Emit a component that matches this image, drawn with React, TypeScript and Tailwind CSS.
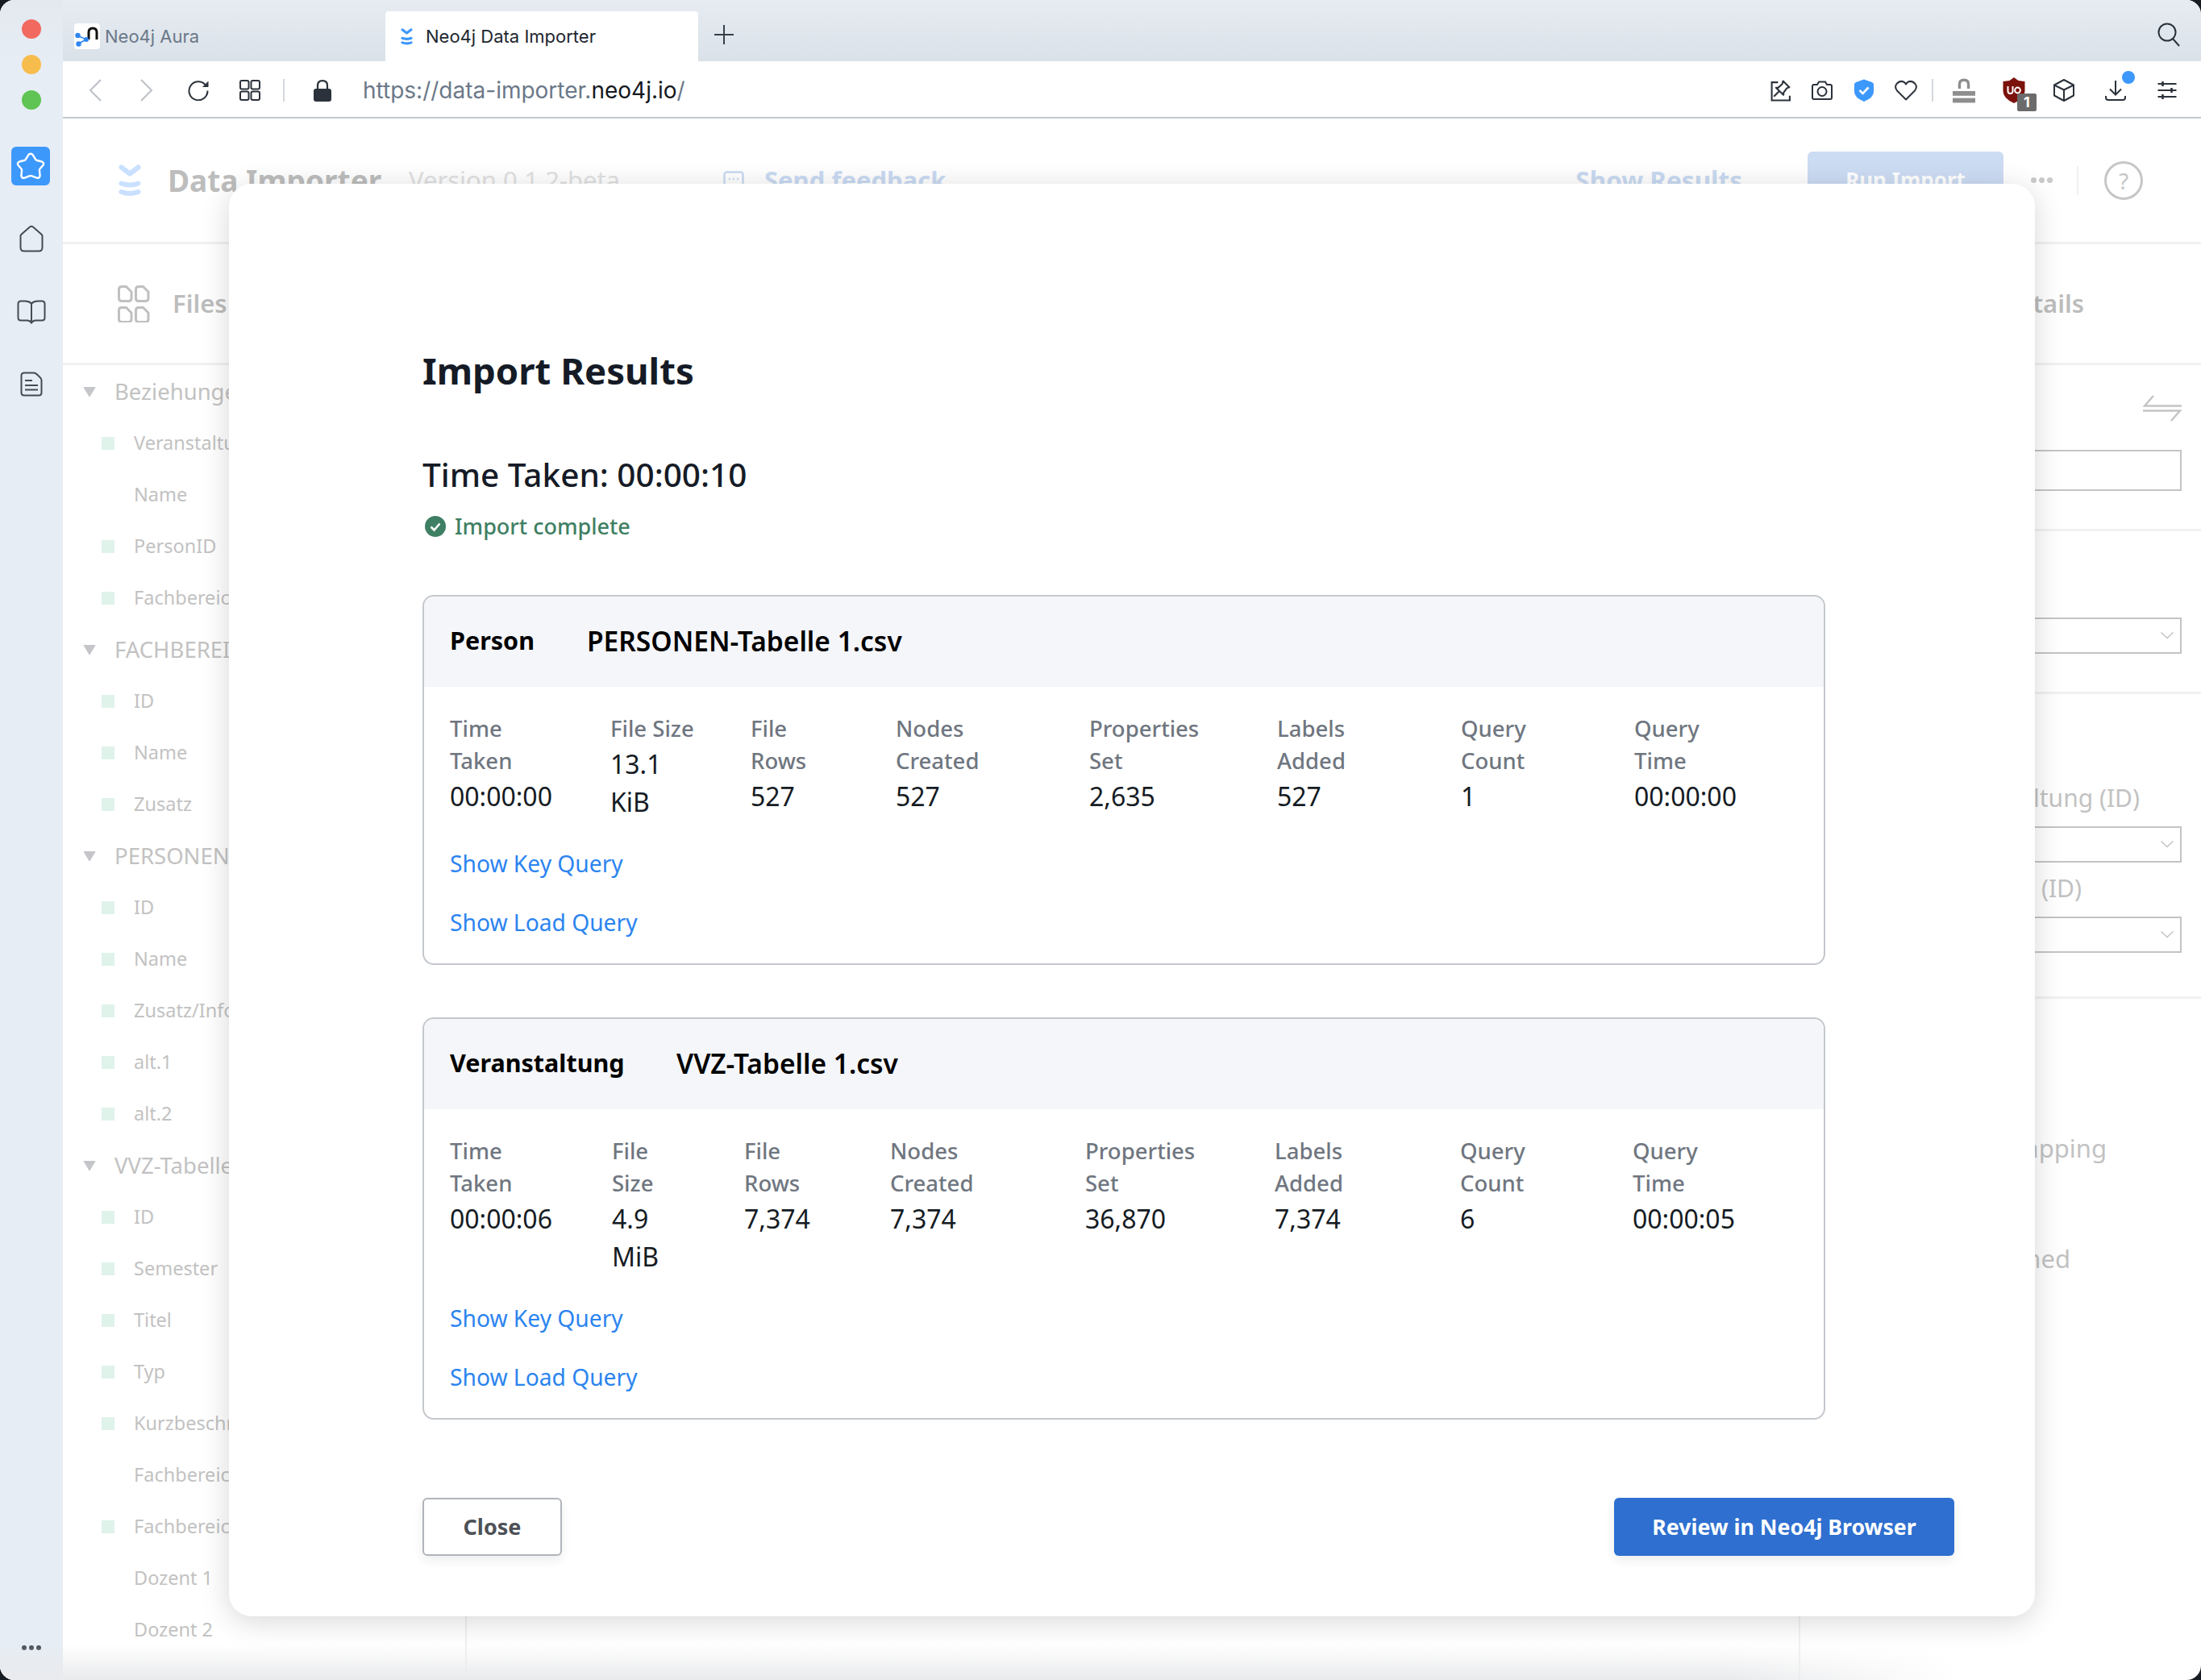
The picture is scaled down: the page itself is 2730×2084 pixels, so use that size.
import { Fragment } from 'react'

interface Stat {
  label: string
  value: string
}

interface ResultCard {
  node: string
  file: string
  gap: string
  cols: string
  stats: Stat[]
}

const cards: ResultCard[] = [
  {
    node: 'Person',
    file: 'PERSONEN-Tabelle 1.csv',
    gap: 'w-[170px]',
    cols: 'grid-cols-[199px_174px_180px_240px_233px_228px_215px_auto]',
    stats: [
      { label: 'Time\nTaken', value: '00:00:00' },
      { label: 'File Size', value: '13.1\nKiB' },
      { label: 'File\nRows', value: '527' },
      { label: 'Nodes\nCreated', value: '527' },
      { label: 'Properties\nSet', value: '2,635' },
      { label: 'Labels\nAdded', value: '527' },
      { label: 'Query\nCount', value: '1' },
      { label: 'Query\nTime', value: '00:00:00' },
    ],
  },
  {
    node: 'Veranstaltung',
    file: 'VVZ-Tabelle 1.csv',
    gap: 'w-[281px]',
    cols: 'grid-cols-[201px_164px_181px_242px_235px_230px_214px_auto]',
    stats: [
      { label: 'Time\nTaken', value: '00:00:06' },
      { label: 'File\nSize', value: '4.9\nMiB' },
      { label: 'File\nRows', value: '7,374' },
      { label: 'Nodes\nCreated', value: '7,374' },
      { label: 'Properties\nSet', value: '36,870' },
      { label: 'Labels\nAdded', value: '7,374' },
      { label: 'Query\nCount', value: '6' },
      { label: 'Query\nTime', value: '00:00:05' },
    ],
  },
]

const tree = [
  { name: 'Beziehungen-Tabelle 1.csv', kind: 'head' },
  { name: 'VeranstaltungID', kind: 'key' },
  { name: 'Name', kind: 'plain' },
  { name: 'PersonID', kind: 'key' },
  { name: 'Fachbereich', kind: 'key' },
  { name: 'FACHBEREICH-Tabelle 1.csv', kind: 'head' },
  { name: 'ID', kind: 'key' },
  { name: 'Name', kind: 'key' },
  { name: 'Zusatz', kind: 'key' },
  { name: 'PERSONEN-Tabelle 1.csv', kind: 'head' },
  { name: 'ID', kind: 'key' },
  { name: 'Name', kind: 'key' },
  { name: 'Zusatz/Info', kind: 'key' },
  { name: 'alt.1', kind: 'key' },
  { name: 'alt.2', kind: 'key' },
  { name: 'VVZ-Tabelle 1.csv', kind: 'head' },
  { name: 'ID', kind: 'key' },
  { name: 'Semester', kind: 'key' },
  { name: 'Titel', kind: 'key' },
  { name: 'Typ', kind: 'key' },
  { name: 'Kurzbeschreibung', kind: 'key' },
  { name: 'Fachbereich 1', kind: 'plain' },
  { name: 'Fachbereich 2', kind: 'key' },
  { name: 'Dozent 1', kind: 'plain' },
  { name: 'Dozent 2', kind: 'plain' },
]

function ImporterLogo({ className, color }: { className: string; color: string }) {
  return (
    <svg viewBox="0 0 28 40" className={className} fill="none" stroke={color} strokeWidth="6" strokeLinecap="round" strokeLinejoin="round">
      <path d="M3.5 3.5 L14 11.5 L24.5 3.5" />
      <path d="M3.5 23.5 Q14 27.5 24.5 23.5" />
      <path d="M3.5 34 Q14 38 24.5 34" />
    </svg>
  )
}

function AuraLogo() {
  return (
    <svg viewBox="0 0 32 32" className="w-[32px] h-[32px] bg-white rounded-[4px] shrink-0" fill="none">
      <path d="M18 20 V11 Q18 6 23 6 Q28 6 28 11 V20" stroke="#111" strokeWidth="3" />
      <path d="M4 15 L15 20 L5.5 25" stroke="#2f86f2" strokeWidth="1.6" />
      <circle cx="4.5" cy="15" r="3.2" fill="#2f86f2" />
      <circle cx="15" cy="20" r="3" fill="#2f86f2" />
      <circle cx="5.5" cy="25.5" r="3.2" fill="#2f86f2" />
    </svg>
  )
}

function FileCell({ x, y }: { x: number; y: number }) {
  return (
    <path
      transform={`translate(${x} ${y})`}
      d="M5 1.5 H10.5 L17 8 V16 Q17 19.5 13.5 19.5 H5 Q1.5 19.5 1.5 16 V5 Q1.5 1.5 5 1.5Z"
    />
  )
}

function SelectBox({ className }: { className: string }) {
  return (
    <div className={`flex items-center justify-end border-2 border-[#c4c4c4] pr-[8px] ${className}`}>
      <svg viewBox="0 0 16 9" className="w-[16px] h-[9px]" fill="none" stroke="#c4c4c4" strokeWidth="1.5">
        <path d="M0.5 0.5 L8 7.5 L15.5 0.5" />
      </svg>
    </div>
  )
}

function Rail() {
  return (
    <aside className="w-[78px] shrink-0 flex flex-col items-center pt-[24px] pb-[37px] bg-gradient-to-b from-[#e4e9f0] to-[#e7edf4] to-[80px] bg-[#e7edf4]">
      <div className="flex flex-col gap-[20px]">
        <div className="w-[24px] h-[24px] rounded-full bg-[#f1695f]" />
        <div className="w-[24px] h-[24px] rounded-full bg-[#f7bd4c]" />
        <div className="w-[24px] h-[24px] rounded-full bg-[#5fc453]" />
      </div>
      <div className="mt-[46px] mr-[2px] w-[48px] h-[48px] rounded-[6px] bg-[#3d98fb] flex items-center justify-center">
        <svg viewBox="0 0 36 34" className="w-[36px] h-[34px]" fill="none" stroke="#fff" strokeWidth="2.4" strokeLinejoin="round">
          <path d="M15.5 2.8 Q18 0.8 20.5 2.8 L24 8.5 Q24.6 9.8 26 10 L32 11.5 Q35 12.8 33.6 15.8 L29.5 20.5 Q28.8 21.4 29 22.8 L29.6 29 Q29 32.6 25.6 31.6 L19.6 29.3 Q18 28.8 16.4 29.3 L10.4 31.6 Q7 32.6 6.4 29 L7 22.8 Q7.2 21.4 6.5 20.5 L2.4 15.8 Q1 12.8 4 11.5 L10 10 Q11.4 9.8 12 8.5 Z" />
        </svg>
      </div>
      <svg viewBox="0 0 30 34" className="mt-[49px] w-[30px] h-[34px]" fill="none" stroke="#454b55" strokeWidth="2">
        <path d="M1.5 14 Q1.5 12.8 2.5 11.8 L13 2.5 Q15 1 17 2.5 L27.5 11.8 Q28.5 12.8 28.5 14 V28 Q28.5 32.5 24 32.5 H6 Q1.5 32.5 1.5 28 Z" />
      </svg>
      <svg viewBox="0 0 36 30" className="mt-[59px] w-[36px] h-[30px]" fill="none" stroke="#454b55" strokeWidth="2">
        <path d="M18 4.5 Q15 1.5 10 1.5 H5 Q1.5 1.5 1.5 5 V22 Q1.5 25.5 5 25.5 H13 Q16 25.5 18 28.5 Q20 25.5 23 25.5 H31 Q34.5 25.5 34.5 22 V5 Q34.5 1.5 31 1.5 H26 Q21 1.5 18 4.5 V28" />
      </svg>
      <svg viewBox="0 0 28 31" className="mt-[59px] w-[28px] h-[31px]" fill="none" stroke="#454b55" strokeWidth="2">
        <path d="M5 1.5 H17 Q19 1.5 21 3.5 L25 7.5 Q26.5 9 26.5 11 V26 Q26.5 29.5 23 29.5 H5 Q1.5 29.5 1.5 26 V5 Q1.5 1.5 5 1.5Z" />
        <path d="M6 11 H15 M6 17 H22 M6 22.5 H22" />
      </svg>
      <div className="mt-auto flex gap-[3px]">
        <div className="w-[6px] h-[6px] rounded-full bg-[#454b55]" />
        <div className="w-[6px] h-[6px] rounded-full bg-[#454b55]" />
        <div className="w-[6px] h-[6px] rounded-full bg-[#454b55]" />
      </div>
    </aside>
  )
}

function TabStrip() {
  return (
    <div className="h-[76px] shrink-0 flex items-end bg-gradient-to-b from-[#e7ecf2] to-[#dae1e8] font-['Inter',sans-serif]">
      <div className="w-[400px] h-[62px] pl-[14px] flex items-center gap-[6px]">
        <AuraLogo />
        <span className="text-[22px] text-[#6b7889]">Neo4j Aura</span>
      </div>
      <div className="w-[388px] h-[62px] bg-white rounded-t-[4px] pl-[19px] flex items-center gap-[16px]">
        <ImporterLogo className="w-[15px] h-[21px]" color="#3d98fb" />
        <span className="text-[22px] text-[#20262e]">Neo4j Data Importer</span>
      </div>
      <svg viewBox="0 0 26 26" className="ml-[19px] mb-[20px] w-[26px] h-[26px]" fill="none" stroke="#3a4048" strokeWidth="2">
        <path d="M13 1 V25 M1 13 H25" />
      </svg>
      <svg viewBox="0 0 28 30" className="ml-auto mr-[26px] mb-[18px] w-[28px] h-[30px]" fill="none" stroke="#2b323b" strokeWidth="2">
        <circle cx="12" cy="12" r="10.5" />
        <path d="M19 20 L27 29" />
      </svg>
    </div>
  )
}

function Toolbar() {
  return (
    <div className="h-[71px] shrink-0 flex items-center bg-white border-b-2 border-[#c3c9d0] pt-[3px] pl-[32px] pr-[30px] font-['Inter',sans-serif]">
      <svg viewBox="0 0 16 28" className="w-[16px] h-[28px]" fill="none" stroke="#bcc1c7" strokeWidth="2">
        <path d="M15 1 L2 14 L15 27" />
      </svg>
      <svg viewBox="0 0 16 28" className="ml-[48px] w-[16px] h-[28px]" fill="none" stroke="#bcc1c7" strokeWidth="2">
        <path d="M1 1 L14 14 L1 27" />
      </svg>
      <svg viewBox="0 0 26 26" className="ml-[43px] w-[26px] h-[26px]" fill="none" stroke="#2b323b" strokeWidth="2">
        <path d="M21.5 6 A11.5 11.5 0 1 0 24.5 13.5" />
        <path d="M25.5 1.5 V9 H18 Z" fill="#2b323b" stroke="none" />
      </svg>
      <svg viewBox="0 0 26 26" className="ml-[38px] w-[26px] h-[26px]" fill="none" stroke="#2b323b" strokeWidth="2">
        <rect x="1" y="1" width="10.5" height="10.5" rx="2" />
        <rect x="14.5" y="1" width="10.5" height="10.5" rx="2" />
        <rect x="1" y="14.5" width="10.5" height="10.5" rx="2" />
        <rect x="14.5" y="14.5" width="10.5" height="10.5" rx="2" />
      </svg>
      <div className="ml-[28px] w-[2px] h-[28px] bg-[#d4d7db]" />
      <svg viewBox="0 0 22 27" className="ml-[36px] w-[22px] h-[27px]">
        <path d="M5 12 V7 Q5 1.2 11 1.2 Q17 1.2 17 7 V12" fill="none" stroke="#2b323b" strokeWidth="2.2" />
        <rect x="0" y="11" width="22" height="16" rx="3" fill="#2b323b" />
      </svg>
      <div className="ml-[39px] text-[28px] text-[#6b7889] whitespace-nowrap">
        https://data-importer.<span className="text-[#14181d]">neo4j.io</span>/
      </div>

      {/* extension icons */}
      <svg viewBox="0 0 24 26" className="ml-auto w-[25px] h-[27px]" fill="none" stroke="#2b323b" strokeWidth="2">
        <path d="M9 3 H1.5 V24.5 H23 V19" />
        <path d="M15 1.5 L22.5 9 L19.5 10 L15.5 15.5 L15.5 18 L6.5 9.5 L9 9.5 L14 5 Z" strokeLinejoin="round" />
        <path d="M10 14 L4 20" />
      </svg>
      <svg viewBox="0 0 26 24" className="ml-[26px] w-[26px] h-[24px]" fill="none" stroke="#2b323b" strokeWidth="2">
        <path d="M3 5 H7 L9 1.5 H17 L19 5 H23 Q25 5 25 7 V21 Q25 23 23 23 H3 Q1 23 1 21 V7 Q1 5 3 5 Z" />
        <circle cx="13" cy="13.5" r="5.5" />
      </svg>
      <svg viewBox="0 0 24 28" className="ml-[27px] w-[24px] h-[28px]">
        <path d="M12 0.5 L22 4 Q24 5 24 7 V16 Q24 23 12 28 Q0 23 0 16 V7 Q0 5 2 4 Z" fill="#3d98fb" />
        <path d="M6.5 14 L10.5 18 L17.5 10.5" fill="none" stroke="#fff" strokeWidth="2.6" />
      </svg>
      <svg viewBox="0 0 28 26" className="ml-[26px] w-[28px] h-[26px]" fill="none" stroke="#2b323b" strokeWidth="2">
        <path d="M14 24.5 L3 13.5 Q-0.5 9 2.5 5 Q6.5 0.5 11 2.5 Q13 3.5 14 5.5 Q15 3.5 17 2.5 Q21.5 0.5 25.5 5 Q28.5 9 25 13.5 Z" strokeLinejoin="round" />
      </svg>
      <div className="ml-[18px] w-[2px] h-[28px] bg-[#d4d7db]" />
      <svg viewBox="0 0 29 32" className="ml-[24px] w-[28px] h-[32px]" fill="#8e8e8e">
        <path d="M7 14 V8 Q7 1 14.5 1 Q22 1 22 8 V14 H18.5 V8 Q18.5 4.5 14.5 4.5 Q10.5 4.5 10.5 8 V14 Z" />
        <rect x="0" y="17" width="29" height="6" />
        <rect x="0" y="26" width="29" height="6" />
      </svg>
      <div className="relative ml-[34px] w-[28px] h-[32px]">
        <svg viewBox="0 0 27 32" className="w-[28px] h-[32px]">
          <path d="M13.5 0 L19 4 L27 5 V17 Q27 26 13.5 32 Q0 26 0 17 V5 L8 4 Z" fill="#7b120c" />
          <path d="M6 11 V17 Q6 20 9 20 Q12 20 12 17 V11" fill="none" stroke="#fff" strokeWidth="2" />
          <circle cx="18" cy="16" r="3.4" fill="none" stroke="#fff" strokeWidth="2" />
        </svg>
        <div className="absolute left-[18px] top-[20px] w-[24px] h-[22px] rounded-[2px] bg-[#6b6b6b] text-white text-[18px] font-bold leading-[22px] text-center">1</div>
      </div>
      <svg viewBox="0 0 26 28" className="ml-[35px] w-[26px] h-[28px]" fill="none" stroke="#2b323b" strokeWidth="2" strokeLinejoin="round">
        <path d="M13 1 L25 7.5 V20.5 L13 27 L1 20.5 V7.5 Z" />
        <path d="M1 7.5 L13 13.5 L25 7.5 M13 13.5 V27" />
      </svg>
      <div className="relative ml-[38px] w-[26px] h-[26px]">
        <svg viewBox="0 0 26 26" className="w-[26px] h-[26px]" fill="none" stroke="#2b323b" strokeWidth="2">
          <path d="M13 1 V18 M6 11.5 L13 18.5 L20 11.5" />
          <path d="M1 20 V22 Q1 25 4 25 H22 Q25 25 25 22 V20" />
        </svg>
        <div className="absolute left-[21px] top-[-11px] w-[16px] h-[16px] rounded-full bg-[#3d98fb]" />
      </div>
      <svg viewBox="0 0 23 22" className="ml-[39px] w-[24px] h-[22px]" fill="none" stroke="#2b323b" strokeWidth="2">
        <path d="M0 3 H23 M0 11 H23 M0 19 H23" />
        <path d="M6 0 V6 M17 8 V14 M6 16 V22" strokeWidth="2.6" />
      </svg>
    </div>
  )
}

function AppHeader() {
  return (
    <header className="h-[156px] shrink-0 flex items-center pl-[69px] border-b-[3px] border-[#f1f1f1]">
      <ImporterLogo className="w-[28px] h-[40px]" color="#c9e0ff" />
      <span className="ml-[33px] w-[299px] text-[37px] font-bold text-[#bdbdbd] whitespace-nowrap">Data Importer</span>
      <span className="w-[390px] text-[31px] text-[#e1e1e1] whitespace-nowrap">Version 0.1.2-beta</span>
      <svg viewBox="0 0 26 24" className="w-[26px] h-[24px]" fill="none" stroke="#c9daf2" strokeWidth="2.5">
        <rect x="1.5" y="1.5" width="23" height="19" rx="3" />
        <path d="M7 10 H9 M12 10 H14 M17 10 H19" />
      </svg>
      <span className="ml-[25px] text-[31px] font-bold text-[#c9daf2] whitespace-nowrap">Send feedback</span>
      <span className="ml-auto text-[31.5px] font-bold text-[#c9daf2] whitespace-nowrap">Show Results</span>
      <div className="ml-[81px] w-[243px] h-[72px] rounded-[6px] bg-[#ccdcf3] flex items-center justify-center text-[26px] font-bold text-white">Run Import</div>
      <div className="ml-[34px] flex gap-[3px]">
        <div className="w-[7px] h-[7px] rounded-full bg-[#cacaca]" />
        <div className="w-[7px] h-[7px] rounded-full bg-[#cacaca]" />
        <div className="w-[7px] h-[7px] rounded-full bg-[#cacaca]" />
      </div>
      <div className="ml-[30px] w-[2px] h-[36px] bg-[#f0f0f0]" />
      <div className="ml-[32px] mr-[72px] w-[48px] h-[48px] rounded-full border-[3px] border-[#c6c6c6] flex items-center justify-center text-[28px] text-[#c6c6c6]">?</div>
    </header>
  )
}

function Sidebar() {
  return (
    <div className="w-[499px] shrink-0 overflow-hidden">
      <div className="h-[150px] flex items-center pl-[68px] border-b-[3px] border-[#f1f1f1]">
        <svg viewBox="0 0 40 46" className="w-[40px] h-[46px]" fill="none" stroke="#c0c0c0" strokeWidth="3">
          <FileCell x={0} y={0} />
          <FileCell x={21} y={0} />
          <FileCell x={0} y={26} />
          <FileCell x={21} y={26} />
        </svg>
        <span className="ml-[28px] text-[31px] font-semibold text-[#bdbdbd]">Files</span>
      </div>
      <div className="pt-[1px]">
        {tree.map((row, i) => (
          <div key={i} className="h-[64px] flex items-center text-[23.5px] whitespace-nowrap text-[#c2c2c2]">
            {row.kind === 'head' ? (
              <Fragment>
                <svg viewBox="0 0 16 14" className="ml-[25px] w-[16px] h-[14px]">
                  <path d="M1 1.5 H15 L8 13 Z" fill="#c4c6ca" stroke="#c4c6ca" strokeLinejoin="round" />
                </svg>
                <span className="ml-[23px] text-[27.5px]">{row.name}</span>
              </Fragment>
            ) : (
              <Fragment>
                <div className={`ml-[48px] w-[16px] h-[16px] ${row.kind === 'key' ? 'bg-[#dff3ea]' : ''}`} />
                <span className="ml-[24px]">{row.name}</span>
              </Fragment>
            )}
          </div>
        ))}
      </div>
    </div>
  )
}

function RightPanel() {
  return (
    <div className="flex-1 min-w-0 flex flex-col border-l-2 border-[#f1f1f1]">
      <div className="h-[150px] shrink-0 flex items-center justify-end pr-[145px] border-b-[3px] border-[#f1f1f1] text-[31px] font-semibold text-[#bdbdbd] whitespace-nowrap">
        Mapping Details
      </div>
      <div className="h-[206px] shrink-0 flex flex-col items-end pr-[24px] pt-[37px] border-b-[3px] border-[#f1f1f1]">
        <svg viewBox="0 0 48 33" className="w-[48px] h-[33px]" fill="none" stroke="#c4c4c4" strokeWidth="2.5">
          <path d="M13 1 L2 13.5 H48 M0 19.5 H46 L35 32" />
        </svg>
        <div className="mt-[35px] w-[451px] h-[51px] border-2 border-[#c4c4c4]" />
      </div>
      <div className="h-[202px] shrink-0 flex flex-col items-end pr-[24px] pt-[107px] border-b-[3px] border-[#f1f1f1]">
        <SelectBox className="w-[451px] h-[45px]" />
      </div>
      <div className="h-[378px] shrink-0 flex flex-col items-end pr-[24px] pt-[109px] border-b-[3px] border-[#f1f1f1] text-[30px] text-[#c2c2c2] whitespace-nowrap">
        <span className="mr-[52px] leading-[40px]">Veranstaltung (ID)</span>
        <SelectBox className="mt-[15px] w-[451px] h-[45px]" />
        <span className="mt-[12px] mr-[124px] leading-[40px]">Person (ID)</span>
        <SelectBox className="mt-[15px] w-[451px] h-[45px]" />
      </div>
      <div className="flex flex-col items-end pt-[165px] text-[31px] text-[#c2c2c2] whitespace-nowrap">
        <span className="mr-[117px] leading-[40px]">Mapping</span>
        <span className="mt-[97px] mr-[162px] leading-[40px]">Unassigned</span>
      </div>
    </div>
  )
}

function Results({ card }: { card: ResultCard }) {
  return (
    <section className="w-[1740px] border-2 border-[#c4c8cd] rounded-[14px] overflow-hidden">
      <div className="h-[112px] bg-[#f5f6fa] pl-[32px] pb-[2px] flex items-center font-bold text-black">
        <span className={`${card.gap} text-[30.5px]`}>{card.node}</span>
        <span className="text-[33.5px] font-semibold">{card.file}</span>
      </div>
      <div className="pl-[32px] pt-[32px] pb-[31px]">
        <div className={`grid ${card.cols}`}>
          {card.stats.map((stat) => (
            <div key={stat.label}>
              <div className="text-[27.5px] leading-[40px] font-medium text-[#6f7680] whitespace-pre-line">{stat.label}</div>
              <div className="text-[32px] leading-[47px] text-[#151b23] whitespace-pre-line">{stat.value}</div>
            </div>
          ))}
        </div>
        <div className="mt-[33px] text-[28.2px] leading-[40px] text-[#2b84f0]">Show Key Query</div>
        <div className="mt-[33px] text-[28.2px] leading-[40px] text-[#2b84f0]">Show Load Query</div>
      </div>
    </section>
  )
}

function ResultsModal() {
  return (
    <div className="absolute z-10 left-[284px] top-[228px] w-[2240px] bg-white rounded-[28px] shadow-[0_6px_36px_rgba(0,0,0,0.16)] pl-[240px] pr-[100px] pt-[203px] pb-[75px]">
      <h1 className="text-[45.5px] leading-[56px] font-bold text-[#151b26]">Import Results</h1>
      <div className="mt-[78px] text-[40.5px] leading-[48px] font-medium text-[#151b26]">Time Taken: 00:00:10</div>
      <div className="mt-[20px] h-[40px] flex items-center gap-[11px] pl-[3px]">
        <svg viewBox="0 0 26 26" className="w-[26px] h-[26px]">
          <circle cx="13" cy="13" r="13" fill="#3f7f63" />
          <path d="M7.5 13.5 L11.5 17.5 L18.5 9.5" fill="none" stroke="#fff" strokeWidth="2.6" />
        </svg>
        <span className="text-[27px] font-medium text-[#3f7f63]">Import complete</span>
      </div>
      <div className="mt-[65px] flex flex-col gap-[65px]">
        {cards.map((card) => (
          <Results key={card.node} card={card} />
        ))}
      </div>
      <div className="mt-[97px] flex justify-between">
        <button className="w-[173px] h-[72px] border-2 border-[#b0b4ba] rounded-[6px] bg-white text-[27px] font-bold text-[#4d5157] shadow-[0_6px_14px_rgba(0,0,0,0.07)]">
          Close
        </button>
        <button className="w-[422px] h-[72px] rounded-[6px] bg-[#2e6fd0] text-[26.7px] font-bold text-white shadow-[0_6px_14px_rgba(0,0,0,0.07)]">
          Review in Neo4j Browser
        </button>
      </div>
    </div>
  )
}

export default function App() {
  return (
    <div className="w-[2730px] h-[2084px] bg-[#171b22]">
      <div className="relative w-full h-full rounded-[18px] overflow-hidden bg-white flex font-['Noto_Sans',sans-serif]">
        <Rail />
        <div className="flex-1 min-w-0 flex flex-col">
          <TabStrip />
          <Toolbar />
          <AppHeader />
          <div className="flex-1 min-h-0 flex">
            <Sidebar />
            <div className="w-[1654px] shrink-0 border-l-2 border-[#f1f1f1] mb-[8px]" />
            <RightPanel />
          </div>
        </div>
        <ResultsModal />
        <div className="absolute left-0 right-[300px] bottom-0 h-[44px] bg-gradient-to-t from-[#e9eaec] to-transparent [mask-image:linear-gradient(to_right,black_88%,transparent)]" />
      </div>
    </div>
  )
}
